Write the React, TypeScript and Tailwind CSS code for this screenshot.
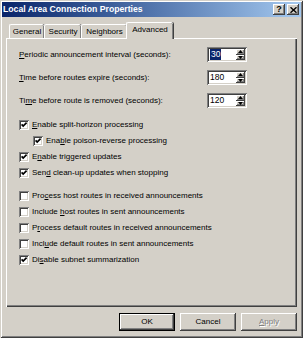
import React from "react";

const raised =
  "shadow-[inset_-1px_-1px_#404040,inset_1px_1px_#ffffff,inset_-2px_-2px_#808080,inset_2px_2px_#d4d0c8]";
const sunken =
  "shadow-[inset_1px_1px_#808080,inset_-1px_-1px_#ffffff,inset_2px_2px_#404040,inset_-2px_-2px_#d4d0c8]";

function U({ children }: { children: React.ReactNode }) {
  return <span className="underline decoration-1 underline-offset-[1px]">{children}</span>;
}

function Check({ checked }: { checked: boolean }) {
  return (
    <span className={`relative block w-[10px] h-[10px] bg-white shrink-0 ${sunken}`}>
      {checked && (
        <svg className="absolute left-0 top-0" width="10" height="10" viewBox="0 0 10 10">
          <path d="M2.6 4.4 L4.2 6.1 L7.6 2.6" stroke="#000" strokeWidth="1.7" fill="none" />
        </svg>
      )}
    </span>
  );
}

function Spin({ value, selected }: { value: string; selected?: boolean }) {
  return (
    <div className={`flex w-[40px] h-[15px] bg-white p-[2px] ${sunken}`}>
      <div className="flex-1 flex items-center pl-[1px] text-[8.5px] leading-none">
        <span className={selected ? "bg-[#0a246a] text-white px-[1px] py-[1px]" : ""}>{value}</span>
      </div>
      <div className="flex flex-col w-[9px]">
        <div className={`flex-1 bg-[#d4d0c8] flex items-center justify-center ${raised}`}>
          <svg width="5" height="3" viewBox="0 0 5 3">
            <path d="M2.5 0 L5 3 L0 3 Z" fill="#000" />
          </svg>
        </div>
        <div className={`flex-1 bg-[#d4d0c8] flex items-center justify-center ${raised}`}>
          <svg width="5" height="3" viewBox="0 0 5 3">
            <path d="M0 0 L5 0 L2.5 3 Z" fill="#000" />
          </svg>
        </div>
      </div>
    </div>
  );
}

function CheckRow({
  checked,
  indent,
  children,
}: {
  checked: boolean;
  indent?: boolean;
  children: React.ReactNode;
}) {
  return (
    <div className={`flex items-center h-[16px] gap-[3px] ${indent ? "ml-[14px]" : ""}`}>
      <Check checked={checked} />
      <span className="whitespace-nowrap">{children}</span>
    </div>
  );
}

function Tab({ label, selected, w }: { label: string; selected?: boolean; w: string }) {
  return (
    <div
      className={`${w} flex items-center justify-center bg-[#d4d0c8] border-l border-t border-white rounded-tl-[2px] rounded-tr-[2px] shadow-[inset_-1px_0_#808080,1px_0_#404040] ${
        selected ? "h-[17px] -mb-[1px] relative z-10 -mx-[1px] pb-[2px]" : "h-[14px]"
      }`}
    >
      {label}
    </div>
  );
}

export default function App() {
  return (
    <div
      className={`w-[303px] h-[338px] bg-[#d4d0c8] pt-[2px] px-[2px] flex flex-col overflow-hidden text-black text-[8px] leading-none font-['Liberation_Sans',Arial,sans-serif] shadow-[inset_1px_1px_#d4d0c8,inset_-1px_-1px_#404040,inset_2px_2px_#ffffff,inset_-2px_-2px_#808080]`}
    >
      {/* Title bar */}
      <div className="h-[15px] shrink-0 flex items-center bg-linear-to-r from-[#0a246a] to-[#a6caf0] pl-[1px] pr-[2px]">
        <span className="flex-1 text-white font-bold text-[8.7px] whitespace-nowrap">
          Local Area Connection Properties
        </span>
        <div className={`w-[12px] h-[11px] bg-[#d4d0c8] flex items-center justify-center ${raised}`}>
          <span className="font-bold text-[9px] leading-none">?</span>
        </div>
        <div className={`ml-[2px] w-[12px] h-[11px] bg-[#d4d0c8] flex items-center justify-center ${raised}`}>
          <svg width="7" height="6" viewBox="0 0 7 6">
            <path d="M0.5 0.3 L6.5 5.7 M6.5 0.3 L0.5 5.7" stroke="#000" strokeWidth="1.4" />
          </svg>
        </div>
      </div>

      <div className="px-[4px] flex flex-col">
        {/* Tabs */}
        <div className="mt-[5px] h-[16px] flex items-end pl-[3px]">
          <Tab label="General" w="w-[35px]" />
          <Tab label="Security" w="w-[37px]" />
          <Tab label="Neighbors" w="w-[46px]" />
          <Tab label="Advanced" w="w-[47px]" selected />
        </div>

        {/* Panel */}
        <div className="h-[269px] flex flex-col pl-[13px] pr-[50px] pt-[9px] shadow-[inset_1px_1px_#ffffff,inset_-1px_-1px_#404040,inset_-2px_-2px_#808080]">
          <div className="flex flex-col gap-[8px]">
            <div className="flex items-center h-[15px]">
              <span className="flex-1 whitespace-nowrap">
                <U>P</U>eriodic announcement interval (seconds):
              </span>
              <Spin value="30" selected />
            </div>
            <div className="flex items-center h-[15px]">
              <span className="flex-1 whitespace-nowrap">
                <U>T</U>ime before routes expire (seconds):
              </span>
              <Spin value="180" />
            </div>
            <div className="flex items-center h-[15px]">
              <span className="flex-1 whitespace-nowrap">
                Ti<U>m</U>e before route is removed (seconds):
              </span>
              <Spin value="120" />
            </div>
          </div>

          <div className="mt-[9px] flex flex-col">
            <CheckRow checked>
              <U>E</U>nable split-horizon processing
            </CheckRow>
            <CheckRow checked indent>
              Ena<U>b</U>le poison-reverse processing
            </CheckRow>
            <CheckRow checked>
              E<U>n</U>able triggered updates
            </CheckRow>
            <CheckRow checked>
              Sen<U>d</U> clean-up updates when stopping
            </CheckRow>
          </div>

          <div className="mt-[7px] flex flex-col">
            <CheckRow checked={false}>
              Pro<U>c</U>ess host routes in received announcements
            </CheckRow>
            <CheckRow checked={false}>
              Include <U>h</U>ost routes in sent announcements
            </CheckRow>
            <CheckRow checked={false}>
              P<U>r</U>ocess default routes in received announcements
            </CheckRow>
            <CheckRow checked={false}>
              Incl<U>u</U>de default routes in sent announcements
            </CheckRow>
            <CheckRow checked>
              Di<U>s</U>able subnet summarization
            </CheckRow>
          </div>
        </div>

        {/* Buttons */}
        <div className="mt-[6px] h-[18px] flex justify-end gap-[5px]">
          <div className="w-[56px] h-[18px] flex items-center justify-center bg-[#d4d0c8] shadow-[inset_0_0_0_1px_#000000,inset_-2px_-2px_#404040,inset_2px_2px_#ffffff,inset_-3px_-3px_#808080]">
            OK
          </div>
          <div className={`w-[56px] h-[18px] flex items-center justify-center bg-[#d4d0c8] ${raised}`}>
            Cancel
          </div>
          <div
            className={`w-[56px] h-[18px] flex items-center justify-center bg-[#d4d0c8] text-[#808080] [text-shadow:1px_1px_0_#ffffff] ${raised}`}
          >
            <span>
              <U>A</U>pply
            </span>
          </div>
        </div>
      </div>
    </div>
  );
}
